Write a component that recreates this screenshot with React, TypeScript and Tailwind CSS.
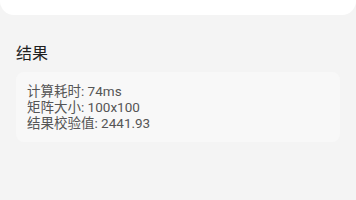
export default function App() {
  return (
    <div className="min-h-[200px] w-full bg-[#f4f4f4] font-['Roboto','Noto_Sans_CJK_SC',sans-serif]">
      <div className="h-[15px] w-full rounded-b-[14px] bg-white" />
      <h2 className="mx-4 mt-[27px] mb-[6px] text-[16px] leading-6 font-normal text-[#1f1f1f]">
        结果
      </h2>
      <div className="mx-4 rounded-lg bg-[#f8f8f8] px-[11px] py-[11px] text-[13.5px] leading-4 text-[#555]">
        <p>计算耗时: 74ms</p>
        <p>矩阵大小: 100x100</p>
        <p>结果校验值: 2441.93</p>
      </div>
    </div>
  );
}
